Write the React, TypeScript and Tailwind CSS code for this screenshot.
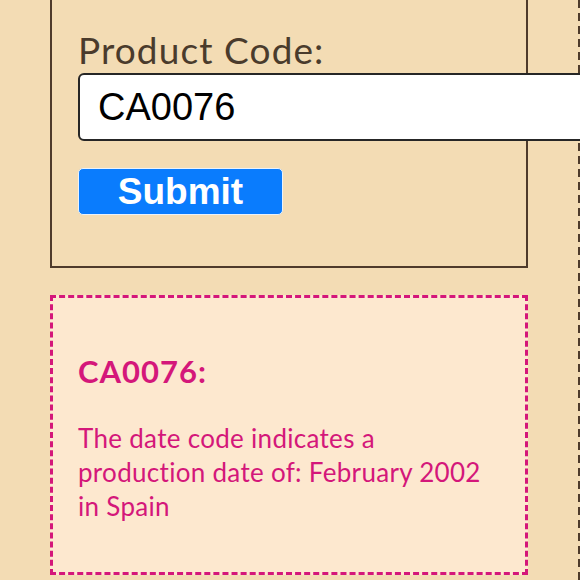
import { useState } from "react";

const App = () => {
  const [code, setCode] = useState("CA0076");

  return (
    <div className="w-[580px] h-[580px] overflow-hidden bg-[#f3dcb4] flex font-['Lato',sans-serif]">
      <div className="w-[577px] shrink-0 pl-[50px] pr-[49px]">
        <form
          className="border-x-2 border-b-2 border-[#4e3b2b] pl-[26px] pt-[31px] pb-[51px]"
          onSubmit={(e) => e.preventDefault()}
        >
          <label className="block text-[37px] leading-none tracking-[1.1px] text-[#4a3b2c]">
            Product Code:
          </label>
          <input
            value={code}
            onChange={(e) => setCode(e.target.value)}
            className="relative z-10 mt-[5px] block w-[540px] h-[68px] bg-white border-2 border-[#262626] rounded-[6px] pl-[18px] text-[38px] text-black font-['Liberation_Sans',Arial,sans-serif] outline-none"
          />
          <button
            type="submit"
            className="mt-[27px] block w-[205px] h-[47px] bg-[#0a7cfd] border border-[#eaf2fb] rounded-[5px] text-white font-bold text-[37px] leading-none font-['Liberation_Sans',Arial,sans-serif]"
          >
            Submit
          </button>
        </form>

        <div className="mt-[27px] h-[280px] bg-[#fde8cf] border-[3px] border-dashed border-[#d4177a] pl-[25px] pr-[20px] pt-[58px] text-[#d4177a]">
          <h3 className="text-[31px] leading-none font-bold tracking-[1px]">CA0076:</h3>
          <p className="mt-[34px] text-[26px] leading-[34px] tracking-[0.3px]">
            The date code indicates a production date of: February 2002 in Spain
          </p>
        </div>
      </div>
      <div className="flex-1 pl-px">
        <div className="w-[2px] h-full bg-[repeating-linear-gradient(to_bottom,#4e3b2b_0_8px,transparent_8px_13px)]" />
      </div>
    </div>
  );
};

export default App;
